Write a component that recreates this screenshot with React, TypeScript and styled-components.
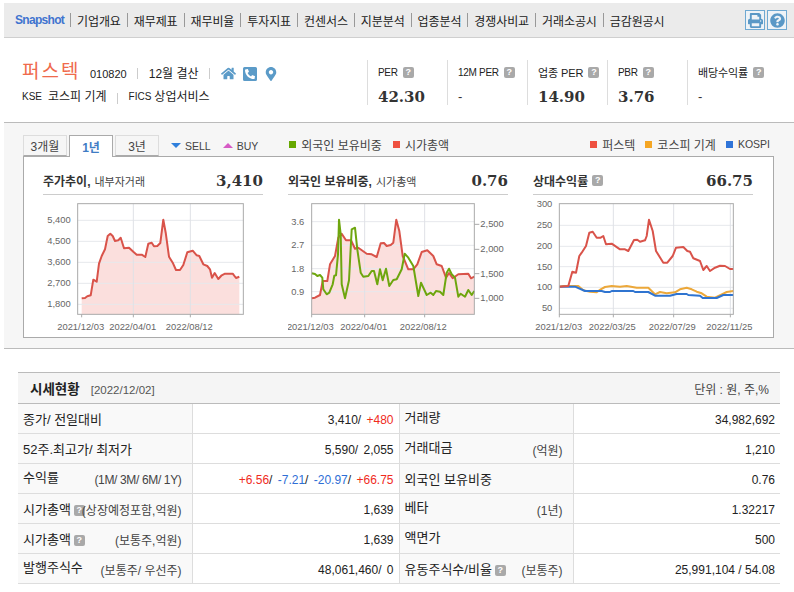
import React from 'react'
import styled, { createGlobalStyle } from 'styled-components'
import { FaHome, FaMapMarkerAlt, FaPhoneSquareAlt, FaPrint, FaQuestionCircle } from 'react-icons/fa'

const FONT = `"Liberation Sans", "Noto Sans CJK KR", sans-serif`
const SERIF = `"DejaVu Serif", "Liberation Serif", serif`

const GlobalStyle = createGlobalStyle`
	html, body {
		margin: 0;
		padding: 0;
		background: #fff;
	}
	body {
		font-family: ${FONT};
		font-size: 12px;
		color: #222;
	}
`

const NAV_ITEMS = ['기업개요', '재무제표', '재무비율', '투자지표', '컨센서스', '지분분석', '업종분석', '경쟁사비교', '거래소공시', '금감원공시']

const STATS = [
	{ label: 'PER', value: '42.30', tight: true },
	{ label: '12M PER', value: '-', tight: true },
	{ label: '업종 PER', value: '14.90' },
	{ label: 'PBR', value: '3.76', tight: true },
	{ label: '배당수익률', value: '-' },
]

type Pt = [number, number]

interface LineDef {
	color: string
	points: Pt[]
}

interface ChartDef {
	dx: number
	area?: Pt[]
	lines: LineDef[]
	plot: { x1: number; x2: number }
	hLines: number[]
	vLines: number[]
	ticks: number[]
	yLeft: { y: number; text: string }[]
	leftEnd: number
	yRight?: { y: number; text: string }[]
	xLabels: { x: number; text: string }[]
}

const RED = '#d9534a'
const GREEN = '#6ea60e'
const ORANGE = '#eca83a'
const BLUE = '#2f74d0'

const priceLine: Pt[] = [[245,532],[255,531],[262,526],[272,523],[280,476],[290,482],[297,428],[305,405],[315,385],[323,345],[331,338],[338,345],[345,360],[355,358],[362,350],[372,382],[387,380],[400,392],[410,401],[425,401],[436,408],[445,368],[455,365],[462,376],[472,375],[481,366],[490,296],[497,335],[507,407],[518,425],[528,447],[540,447],[550,432],[562,394],[578,389],[590,403],[598,405],[610,430],[622,435],[630,445],[636,470],[644,456],[655,474],[665,463],[675,458],[698,458],[708,471],[718,467]]

const capLine: Pt[] = [[125,532],[135,530],[150,522],[158,480],[172,480],[180,430],[195,405],[205,350],[215,338],[228,358],[243,358],[255,383],[265,380],[290,398],[305,400],[320,408],[332,367],[342,366],[350,375],[362,372],[370,365],[379,296],[388,330],[398,405],[415,445],[430,445],[442,430],[455,393],[472,388],[490,405],[500,430],[515,435],[528,470],[537,456],[548,472],[565,460],[595,458],[603,472],[613,467]]

const foreignLine: Pt[] = [[125,457],[135,459],[142,465],[150,462],[157,470],[160,505],[170,520],[178,515],[188,490],[193,464],[198,463],[204,400],[207,296],[212,340],[215,490],[225,532],[237,478],[245,325],[255,320],[262,385],[272,455],[280,467],[295,465],[305,450],[312,450],[322,490],[330,445],[338,478],[348,443],[358,495],[370,477],[380,475],[395,445],[404,398],[415,410],[430,435],[445,525],[453,485],[470,522],[482,515],[490,522],[498,510],[510,512],[520,522],[530,455],[537,443],[545,460],[555,470],[565,527],[572,518],[585,527],[595,507],[605,522],[613,510]]

const relRed: Pt[] = [[88,497],[115,495],[127,452],[138,455],[148,405],[155,395],[168,375],[178,335],[188,332],[200,350],[212,350],[220,345],[228,370],[245,368],[270,385],[285,385],[295,390],[312,357],[322,356],[330,362],[345,358],[350,345],[357,296],[368,330],[378,390],[400,425],[412,425],[428,405],[438,380],[460,378],[472,390],[480,392],[490,412],[510,420],[520,447],[530,435],[540,450],[555,440],[570,434],[585,435],[600,444],[610,444]]

const relOrange: Pt[] = [[88,497],[100,495],[145,495],[160,508],[180,512],[200,514],[212,505],[225,498],[245,495],[270,497],[290,495],[320,500],[355,500],[375,520],[390,513],[410,517],[435,514],[450,505],[470,500],[485,505],[500,512],[515,517],[530,527],[555,530],[575,520],[590,513],[610,510]]

const relBlue: Pt[] = [[88,497],[135,497],[165,510],[215,510],[225,513],[240,513],[245,510],[310,510],[315,513],[355,513],[375,524],[420,524],[440,519],[470,519],[475,522],[510,524],[518,531],[560,531],[580,522],[610,522]]

// point lists were read off 3x crops, dx is the column's left edge in that crop
const CHARTS: { title: string; sub?: string; help?: boolean; value: string; def: ChartDef }[] = [
	{
		title: '주가추이,',
		sub: '내부자거래',
		value: '3,410',
		def: {
			dx: 129,
			plot: { x1: 233, x2: 730 },
			area: priceLine,
			lines: [{ color: RED, points: priceLine }],
			hLines: [298, 361, 424, 487, 550],
			vLines: [400, 571],
			ticks: [245, 400, 571],
			leftEnd: 212,
			yLeft: [
				{ y: 298, text: '5,400' },
				{ y: 361, text: '4,500' },
				{ y: 424, text: '3,600' },
				{ y: 487, text: '2,700' },
				{ y: 550, text: '1,800' },
			],
			xLabels: [
				{ x: 242, text: '2021/12/03' },
				{ x: 398, text: '2022/04/01' },
				{ x: 568, text: '2022/08/12' },
			],
		},
	},
	{
		title: '외국인 보유비중,',
		sub: '시가총액',
		value: '0.76',
		def: {
			dx: 54,
			plot: { x1: 125, x2: 613 },
			area: capLine,
			lines: [
				{ color: RED, points: capLine },
				{ color: GREEN, points: foreignLine },
			],
			hLines: [302, 373, 443, 512],
			vLines: [284, 464],
			ticks: [125, 284, 464],
			leftEnd: 103,
			yLeft: [
				{ y: 302, text: '3.6' },
				{ y: 373, text: '2.7' },
				{ y: 443, text: '1.8' },
				{ y: 512, text: '0.9' },
			],
			yRight: [
				{ y: 310, text: '2,500' },
				{ y: 385, text: '2,000' },
				{ y: 458, text: '1,500' },
				{ y: 532, text: '1,000' },
			],
			xLabels: [
				{ x: 121, text: '2021/12/03' },
				{ x: 281, text: '2022/04/01' },
				{ x: 460, text: '2022/08/12' },
			],
		},
	},
	{
		title: '상대수익률',
		help: true,
		value: '66.75',
		def: {
			dx: 9,
			plot: { x1: 88, x2: 610 },
			lines: [
				{ color: ORANGE, points: relOrange },
				{ color: BLUE, points: relBlue },
				{ color: RED, points: relRed },
			],
			hLines: [313, 376, 437, 499, 562],
			vLines: [250, 431, 601],
			ticks: [88, 250, 431, 601],
			leftEnd: 67,
			yLeft: [
				{ y: 250, text: '300' },
				{ y: 313, text: '250' },
				{ y: 376, text: '200' },
				{ y: 437, text: '150' },
				{ y: 499, text: '100' },
				{ y: 562, text: '50' },
			],
			xLabels: [
				{ x: 86, text: '2021/12/03' },
				{ x: 247, text: '2022/03/25' },
				{ x: 427, text: '2022/07/29' },
				{ x: 598, text: '2022/11/25' },
			],
		},
	},
]

const Chart: React.FC<{ def: ChartDef }> = ({ def }) => {
	const px = (x: number) => x / 3 - def.dx / 3
	const py = (y: number) => y / 3 - 74
	const path = (pts: Pt[]) => pts.map(([x, y]) => `${px(x).toFixed(1)},${py(y).toFixed(1)}`).join(' ')
	const bottom = py(580)
	const top = py(248)
	return (
		<svg width="220" height="141" viewBox="0 0 220 141" fontFamily={FONT} fontSize="9.4" fill="#666">
			<rect x={px(def.plot.x1)} y={top} width={px(def.plot.x2) - px(def.plot.x1)} height={bottom - top} fill="#fff" />
			{def.area && (
				<polygon
					points={`${path(def.area)} ${px(def.area[def.area.length - 1][0])},${bottom} ${px(def.area[0][0])},${bottom}`}
					fill="#fbdfdd"
				/>
			)}
			{def.hLines.map((y) => (
				<line key={y} x1={px(def.plot.x1)} x2={px(def.plot.x2)} y1={py(y)} y2={py(y)} stroke="#e6e8ec" />
			))}
			{def.vLines.map((x) => (
				<line key={x} x1={px(x)} x2={px(x)} y1={top} y2={bottom} stroke="#dfe1e6" />
			))}
			{def.lines.map((l) => (
				<polyline key={l.color} points={path(l.points)} fill="none" stroke={l.color} strokeWidth="2" strokeLinejoin="round" />
			))}
			<rect x={px(def.plot.x1)} y={top} width={px(def.plot.x2) - px(def.plot.x1)} height={bottom - top} fill="none" stroke="#aaa" />
			{def.ticks.map((x) => (
				<line key={x} x1={px(x)} x2={px(x)} y1={bottom} y2={bottom + 3} stroke="#aaa" />
			))}
			{def.yLeft.map((t) => (
				<text key={t.text} x={px(def.leftEnd)} y={py(t.y) + 3} textAnchor="end">
					{t.text}
				</text>
			))}
			{def.yRight?.map((t) => (
				<g key={t.text}>
					<line x1={px(def.plot.x2)} x2={px(def.plot.x2) + 5} y1={py(t.y)} y2={py(t.y)} stroke="#aaa" />
					<text x={px(def.plot.x2) + 6} y={py(t.y) + 3}>
						{t.text}
					</text>
				</g>
			))}
			{def.xLabels.map((t) => (
				<text key={t.text} x={px(t.x)} y={py(617) + 3} textAnchor="middle">
					{t.text}
				</text>
			))}
		</svg>
	)
}

type Seg = { text: string; tone?: 'up' | 'down' }

interface CellDef {
	label: string
	sub?: string
	tightSub?: boolean
	help?: boolean
	low?: boolean
	value: Seg[]
}

const ROWS: { left: CellDef; right: CellDef }[] = [
	{
		left: { label: '종가/ 전일대비', low: true, value: [{ text: '3,410/ ' }, { text: '+480', tone: 'up' }] },
		right: { label: '거래량', value: [{ text: '34,982,692' }] },
	},
	{
		left: { label: '52주.최고가/ 최저가', low: true, value: [{ text: '5,590/ 2,055' }] },
		right: { label: '거래대금', sub: '(억원)', value: [{ text: '1,210' }] },
	},
	{
		left: {
			label: '수익률',
			sub: '(1M/ 3M/ 6M/ 1Y)',
			tightSub: true,
			value: [
				{ text: '+6.56', tone: 'up' },
				{ text: '/ ' },
				{ text: '-7.21', tone: 'down' },
				{ text: '/ ' },
				{ text: '-20.97', tone: 'down' },
				{ text: '/ ' },
				{ text: '+66.75', tone: 'up' },
			],
		},
		right: { label: '외국인 보유비중', low: true, value: [{ text: '0.76' }] },
	},
	{
		left: { label: '시가총액', help: true, low: true, sub: '(상장예정포함,억원)', value: [{ text: '1,639' }] },
		right: { label: '베타', sub: '(1년)', value: [{ text: '1.32217' }] },
	},
	{
		left: { label: '시가총액', help: true, low: true, sub: '(보통주,억원)', value: [{ text: '1,639' }] },
		right: { label: '액면가', value: [{ text: '500' }] },
	},
	{
		left: { label: '발행주식수', sub: '(보통주/ 우선주)', value: [{ text: '48,061,460/ 0' }] },
		right: { label: '유동주식수/비율', help: true, low: true, sub: '(보통주)', value: [{ text: '25,991,104 / 54.08' }] },
	},
]

const HeadCell: React.FC<CellDef> = ({ label, sub, tightSub, help, low }) => (
	<LabelCell>
		<LabelInner>
			<LabelMain $low={low}>
				{label}
				{help && <HelpBadge $small>?</HelpBadge>}
			</LabelMain>
			{sub && <LabelSub $tight={tightSub}>{sub}</LabelSub>}
		</LabelInner>
	</LabelCell>
)

const App: React.FC = () => (
	<Page>
		<GlobalStyle />
		<Nav>
			<Brand>Snapshot</Brand>
			{NAV_ITEMS.map((item) => (
				<NavItem key={item}>{item}</NavItem>
			))}
			<NavActions>
				<IconButton>
					<FaPrint size={15} />
				</IconButton>
				<IconButton>
					<FaQuestionCircle size={15} />
				</IconButton>
			</NavActions>
		</Nav>

		<Summary>
			<Company>
				<CompanyRow>
					<CompanyName>퍼스텍</CompanyName>
					<Code>010820</Code>
					<Divider />
					<span>12월 결산</span>
					<Divider />
					<Icons>
						<FaHome size={15} />
						<FaPhoneSquareAlt size={16} />
						<FaMapMarkerAlt size={14} />
					</Icons>
				</CompanyRow>
				<MarketRow>
					<LatinTag>KSE</LatinTag>
					<MarketName>코스피 기계</MarketName>
					<Divider />
					<LatinTag>FICS</LatinTag>
					<Industry>상업서비스</Industry>
				</MarketRow>
			</Company>
			<Stats>
				{STATS.map((s) => (
					<Stat key={s.label}>
						<StatLabel $tight={s.tight}>
							{s.label}
							<HelpBadge>?</HelpBadge>
						</StatLabel>
						{s.value === '-' ? <StatDash>-</StatDash> : <StatValue>{s.value}</StatValue>}
					</Stat>
				))}
			</Stats>
		</Summary>

		<ChartSection>
			<TabBar>
				<Tab>3개월</Tab>
				<Tab $active>1년</Tab>
				<Tab>3년</Tab>
				<TradeLegend>
					<Arrow $color="#2f7fdc" />
					<span>SELL</span>
				</TradeLegend>
				<TradeLegend>
					<Arrow $color="#d65bc5" $up />
					<span>BUY</span>
				</TradeLegend>
				<HoldLegend>
					<LegendItem>
						<Swatch $color="#66a800" />
						외국인 보유비중
					</LegendItem>
					<LegendItem>
						<Swatch $color="#ef5140" />
						시가총액
					</LegendItem>
				</HoldLegend>
				<ReturnLegend>
					<LegendItem>
						<Swatch $color="#ef5140" />
						퍼스텍
					</LegendItem>
					<LegendItem>
						<Swatch $color="#f5a623" />
						코스피 기계
					</LegendItem>
					<LegendItem>
						<Swatch $color="#2f74d8" />
						<LegendLatin>KOSPI</LegendLatin>
					</LegendItem>
				</ReturnLegend>
			</TabBar>
			<ChartPanel>
				{CHARTS.map((c) => (
					<ChartColumn key={c.title}>
						<ChartHead>
							<ChartTitle>
								<strong>{c.title}</strong>
								{c.sub && <ChartSub>{c.sub}</ChartSub>}
								{c.help && <HelpBadge>?</HelpBadge>}
							</ChartTitle>
							<ChartValue>{c.value}</ChartValue>
						</ChartHead>
						<Chart def={c.def} />
					</ChartColumn>
				))}
			</ChartPanel>
		</ChartSection>

		<PriceTable>
			<colgroup>
				<col width="174" />
				<col width="207" />
				<col width="174" />
				<col width="207" />
			</colgroup>
			<thead>
				<tr>
					<TableHead colSpan={2}>
						<TableTitle>시세현황</TableTitle>
						<TableDate>[2022/12/02]</TableDate>
					</TableHead>
					<TableUnit colSpan={2}>단위 : 원, 주,%</TableUnit>
				</tr>
			</thead>
			<tbody>
				{ROWS.map((r, i) => (
					<tr key={i}>
						<HeadCell {...r.left} />
						<ValueCell $divided>
							{r.left.value.map((s, j) => (
								<Segment key={j} $tone={s.tone}>
									{s.text}
								</Segment>
							))}
						</ValueCell>
						<HeadCell {...r.right} />
						<ValueCell>
							{r.right.value.map((s, j) => (
								<Segment key={j} $tone={s.tone}>
									{s.text}
								</Segment>
							))}
						</ValueCell>
					</tr>
				))}
			</tbody>
		</PriceTable>
	</Page>
)

const Page = styled.div`
	width: 794px;
	height: 592px;
	overflow: hidden;
	padding: 3px 0 0 4px;
	box-sizing: border-box;
`

const Nav = styled.div`
	display: flex;
	align-items: center;
	height: 34px;
	padding-left: 11px;
	background: #ebebeb;
	border-bottom: 1px solid #cfcfcf;
	box-sizing: content-box;
	font-size: 12px;
	color: #222;
`

const Brand = styled.span`
	width: 55px;
	font-weight: 700;
	letter-spacing: -0.7px;
	color: #3f74cf;
`

const NavItem = styled.span`
	display: flex;
	align-items: center;
	height: 14px;
	padding: 0 6px;
	border-left: 1px solid #999;
	letter-spacing: -0.1px;
	white-space: nowrap;
`

const NavActions = styled.div`
	display: flex;
	gap: 2px;
	margin-left: auto;
	margin-right: 7px;
`

const IconButton = styled.span`
	display: flex;
	align-items: center;
	justify-content: center;
	width: 18px;
	height: 18px;
	border: 1px solid #6fa9d2;
	background: #eef3f7;
	color: #5a98c6;
`

const Summary = styled.div`
	display: flex;
	justify-content: space-between;
	height: 84px;
	padding: 22px 27px 0 18px;
	box-sizing: border-box;
`

const Company = styled.div`
	display: flex;
	flex-direction: column;
	gap: 5px;
`

const CompanyRow = styled.div`
	display: flex;
	align-items: center;
	height: 24px;
	font-size: 12px;
`

const CompanyName = styled.span`
	width: 68px;
	font-size: 19px;
	line-height: 24px;
	letter-spacing: 2px;
	color: #ef6a4c;
`

const Code = styled.span`
	position: relative;
	top: 2px;
	font-size: 11px;
`

const Divider = styled.span`
	width: 1px;
	height: 11px;
	margin: 2px 11px 0 10px;
	background: #ccc;
`

const Icons = styled.span`
	display: flex;
	align-items: center;
	gap: 6px;
	margin-top: 3px;
	color: #5b9bc8;
`

const MarketRow = styled.div`
	display: flex;
	align-items: center;
	font-size: 12px;
	line-height: 16px;
`

const LatinTag = styled.span`
	font-size: 10px;
`

const MarketName = styled.span`
	margin-left: 6px;
`

const Industry = styled.span`
	margin-left: 3px;
`

const Stats = styled.div`
	display: flex;
	height: 45px;
`

const Stat = styled.div`
	width: 69px;
	padding-left: 10px;
	border-left: 1px solid #ddd;
`

const StatLabel = styled.div<{ $tight?: boolean }>`
	display: flex;
	align-items: center;
	gap: 5px;
	height: 24px;
	font-size: ${({ $tight }) => ($tight ? '10px' : '11px')};
	letter-spacing: ${({ $tight }) => ($tight ? '-0.3px' : '-0.1px')};
	white-space: nowrap;
`

const StatValue = styled.div`
	margin-top: 3px;
	font-family: ${SERIF};
	font-weight: 700;
	font-size: 15px;
	line-height: 20px;
	color: #333;
`

const StatDash = styled(StatValue)`
	font-family: ${FONT};
	font-weight: 400;
	font-size: 13px;
`

const HelpBadge = styled.span<{ $small?: boolean }>`
	display: inline-flex;
	align-items: center;
	justify-content: center;
	width: 11px;
	height: 11px;
	margin-left: ${({ $small }) => ($small ? '3px' : '0')};
	margin-right: ${({ $small }) => ($small ? '-3px' : '0')};
	border-radius: 2px;
	background: #a9a9a9;
	color: #fff;
	font-size: 9px;
	font-weight: 700;
	line-height: 11px;
	vertical-align: ${({ $small }) => ($small ? '1px' : '-1px')};
`

const ChartSection = styled.div`
	height: 227px;
	padding: 11px 20px 0 19px;
	box-sizing: border-box;
	background: #f6f6f6;
	border-top: 1px solid #bbb;
	border-bottom: 1px solid #bbb;
`

const TabBar = styled.div`
	position: relative;
	display: flex;
	align-items: flex-end;
	gap: 2px;
	height: 22px;
	z-index: 1;
`

const Tab = styled.span<{ $active?: boolean }>`
	display: flex;
	align-items: center;
	justify-content: center;
	width: 44px;
	height: ${({ $active }) => ($active ? '22px' : '21px')};
	margin-bottom: ${({ $active }) => ($active ? '-1px' : '0')};
	border: 1px solid ${({ $active }) => ($active ? '#aaa' : '#ddd')};
	border-bottom: ${({ $active }) => ($active ? 'none' : '1px solid #aaa')};
	box-sizing: border-box;
	background: ${({ $active }) => ($active ? '#fff' : '#f6f6f6')};
	color: ${({ $active }) => ($active ? '#3f7cc4' : '#444')};
	font-weight: ${({ $active }) => ($active ? 700 : 400)};
	font-size: 12px;
`

const TradeLegend = styled.span`
	display: flex;
	align-items: center;
	gap: 4px;
	height: 21px;
	margin-left: 10px;
	font-size: 10.5px;
	color: #444;
`

const Arrow = styled.span<{ $color: string; $up?: boolean }>`
	width: 0;
	height: 0;
	border-left: 5px solid transparent;
	border-right: 5px solid transparent;
	border-${({ $up }) => ($up ? 'bottom' : 'top')}: 5px solid ${({ $color }) => $color};
`

const HoldLegend = styled.div`
	display: flex;
	gap: 11px;
	align-items: center;
	height: 21px;
	padding-bottom: 3px;
	box-sizing: border-box;
	margin-left: 29px;
`

const ReturnLegend = styled(HoldLegend)`
	gap: 10px;
	margin-left: auto;
	margin-right: 4px;
`

const LegendItem = styled.span`
	display: flex;
	align-items: center;
	gap: 5px;
	font-size: 12px;
	color: #444;
	white-space: nowrap;
`

const LegendLatin = styled.span`
	font-size: 10.5px;
`

const Swatch = styled.span<{ $color: string }>`
	width: 7px;
	height: 7px;
	background: ${({ $color }) => $color};
`

const ChartPanel = styled.div`
	display: flex;
	gap: 25px;
	height: 182px;
	padding: 0 0 0 19px;
	box-sizing: border-box;
	background: #fff;
	border: 1px solid #aaa;
`

const ChartColumn = styled.div`
	display: flex;
	flex-direction: column;
	width: 220px;
`

const ChartHead = styled.div`
	display: flex;
	align-items: center;
	justify-content: space-between;
	height: 38px;
	padding-top: 10px;
	box-sizing: border-box;
	border-bottom: 1px solid #ccc;
`

const ChartTitle = styled.div`
	display: flex;
	align-items: center;
	gap: 4px;
	font-size: 12px;
	color: #333;
	white-space: nowrap;
`

const ChartSub = styled.span`
	font-weight: 400;
	font-size: 11px;
	color: #444;
`

const ChartValue = styled.span`
	font-family: ${SERIF};
	font-weight: 700;
	font-size: 15px;
	color: #333;
`

const PriceTable = styled.table`
	width: 762px;
	margin: 23px 0 0 14px;
	border-collapse: collapse;
	table-layout: fixed;
	font-size: 12px;
	color: #222;
`

const TableHead = styled.th`
	height: 30px;
	padding: 0 0 0 12px;
	background: #f5f5f5;
	border-top: 1px solid #bbb;
	border-bottom: 1px solid #bbb;
	text-align: left;
	font-weight: 400;
`

const TableTitle = styled.strong`
	font-size: 13.5px;
	margin-right: 11px;
`

const TableDate = styled.span`
	font-size: 11.5px;
	color: #555;
`

const TableUnit = styled(TableHead)`
	padding: 0 11px 0 0;
	text-align: right;
	color: #444;
`

const LabelCell = styled.td`
	height: 29px;
	padding: 0 10px 0 5px;
	background: #f9f9f9;
	border-bottom: 1px solid #ddd;
	border-right: 1px solid #ddd;
`

const LabelInner = styled.div`
	display: flex;
	align-items: center;
	justify-content: space-between;
	white-space: nowrap;
`

const LabelMain = styled.span<{ $low?: boolean }>`
	position: relative;
	top: ${({ $low }) => ($low ? '0' : '-2px')};
	font-size: 13px;
`

const LabelSub = styled.span<{ $tight?: boolean }>`
	position: relative;
	top: 1px;
	color: #444;
	font-size: 12px;
	letter-spacing: ${({ $tight }) => ($tight ? '-0.35px' : '0')};
`

const ValueCell = styled.td<{ $divided?: boolean }>`
	padding: 2px 5px 0 0;
	text-align: right;
	border-bottom: 1px solid #ddd;
	border-right: ${({ $divided }) => ($divided ? '1px solid #ddd' : 'none')};
	word-spacing: ${({ $divided }) => ($divided ? '2px' : '0')};
	white-space: nowrap;
`

const Segment = styled.span<{ $tone?: 'up' | 'down' }>`
	color: ${({ $tone }) => ($tone === 'up' ? '#f02b1d' : $tone === 'down' ? '#2f6fd6' : 'inherit')};
`

export default App
